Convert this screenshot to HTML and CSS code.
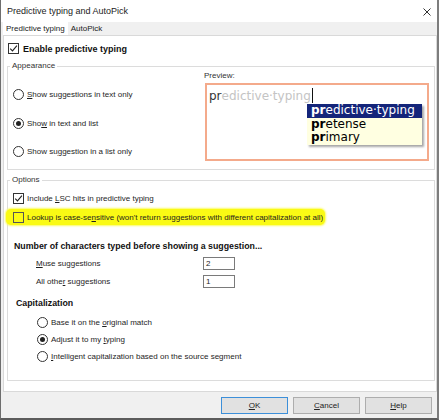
FILE: index.html
```html
<!DOCTYPE html>
<html>
<head>
<meta charset="utf-8">
<link rel="stylesheet" href="styles.css">
</head>
<body>
<div class="window">
  <div class="titlebar">
    <span class="title">Predictive typing and AutoPick</span>
    <svg class="close" width="8" height="8" viewBox="0 0 8 8"><path d="M0.5 0.5 L7.5 7.5 M7.5 0.5 L0.5 7.5" stroke="#333" stroke-width="1" fill="none"/></svg>
  </div>
  <div class="tabs">
    <div class="tab active">Predictive typing</div>
    <div class="tab">AutoPick</div>
  </div>
  <div class="panel">
    <div class="row enable">
      <span class="cb"><svg width="11" height="11" viewBox="0 0 11 11"><path d="M2.2 5.6 L4.5 7.9 L8.9 2.6" stroke="#222" stroke-width="1.1" fill="none"/></svg></span>
      <span class="bold big">Enable predictive typing</span>
    </div>
    <fieldset class="group appearance">
      <legend>Appearance</legend>
      <div class="app-body">
        <div class="radios">
          <div class="row"><span class="rb"></span><span><u>S</u>how suggestions in text only</span></div>
          <div class="row"><span class="rb on"></span><span>Sho<u>w</u> in text and list</span></div>
          <div class="row"><span class="rb"></span><span>Show su<u>g</u>gestion in a list only</span></div>
        </div>
        <div class="preview">
          <div class="preview-label">Preview:</div>
          <div class="preview-box">
            <div class="preview-line"><span class="typed">pr</span><span class="ghost">edictive·typing</span><span class="caret"></span></div>
            <div class="list">
              <div class="item sel"><b>pr</b>edictive·typing</div>
              <div class="item"><b>pr</b>etense</div>
              <div class="item"><b>pr</b>imary</div>
            </div>
          </div>
        </div>
      </div>
    </fieldset>
    <fieldset class="group options">
      <legend>Options</legend>
      <div class="row opt1">
        <span class="cb"><svg width="11" height="11" viewBox="0 0 11 11"><path d="M2.2 5.6 L4.5 7.9 L8.9 2.6" stroke="#222" stroke-width="1.1" fill="none"/></svg></span>
        <span>Include <u>L</u>SC hits in predictive typing</span>
      </div>
      <div class="row hl">
        <span class="cb"></span>
        <span>Lookup is case-se<u>n</u>sitive (won't return suggestions with different capitalization at all)</span>
      </div>
      <div class="heading num">Number of characters typed before showing a suggestion...</div>
      <div class="field-row first">
        <span class="field-label"><u>M</u>use suggestions</span>
        <span class="input">2</span>
      </div>
      <div class="field-row">
        <span class="field-label">All othe<u>r</u> suggestions</span>
        <span class="input">1</span>
      </div>
      <div class="heading cap">Capitalization</div>
      <div class="cap-radios">
        <div class="row"><span class="rb"></span><span>Base it on the <u>o</u>riginal match</span></div>
        <div class="row"><span class="rb on"></span><span>Adjust it to my <u>t</u>yping</span></div>
        <div class="row"><span class="rb"></span><span><u>I</u>ntelligent capitalization based on the source segment</span></div>
      </div>
    </fieldset>
  </div>
  <div class="buttonbar">
    <div class="btn default"><u>O</u>K</div>
    <div class="btn"><u>C</u>ancel</div>
    <div class="btn"><u>H</u>elp</div>
  </div>
</div>
</body>
</html>
```

FILE: styles.css
```css
* { box-sizing: border-box; }
html, body { margin: 0; padding: 0; background: #ffffff; }
body {
  width: 440px; height: 420px; overflow: hidden;
  font-family: "Liberation Sans", Arial, sans-serif;
  font-size: 8px; color: #1e1e1e;
}
u { text-decoration: underline; text-underline-offset: 1px; }

.window {
  width: 439px; height: 420px;
  border-left: 1px solid #6e6e6e;
  border-right: 2px solid #7d7d7d;
  border-bottom: 2px solid #5c5c5c;
  background: #f0f0f0;
  display: flex; flex-direction: column;
}
.titlebar {
  height: 22px; flex: none; background: #fff;
  display: flex; align-items: center; justify-content: space-between;
  padding: 0 6px; font-size: 9px; color: #222;
}
.close { display: block; margin-top: 1px; }

.tabs { height: 13px; flex: none; display: flex; padding-left: 2px; background: #f0f0f0; }
.tab { line-height: 13px; padding: 0 3px; color: #222; }
.tab.active { background: #fff; }

.panel {
  height: 357px; flex: none; margin-left: 2px; width: 434px;
  background: #fff; border: 1px solid #d9d9d9;
  padding: 7px 1px 0 3px;
}

.row { display: flex; align-items: center; gap: 3px; height: 11px; }
.enable { padding-left: 1px; gap: 4px; }
.bold { font-weight: bold; }
.big { font-size: 9px; color: #111; }

.cb {
  width: 11px; height: 11px; flex: none; border: 1px solid #333; background: #fff;
}
.cb svg { display: block; margin: -1px; }
.rb {
  width: 11px; height: 11px; flex: none; border: 1px solid #333; border-radius: 50%;
  background: #fff; display: flex; align-items: center; justify-content: center;
}
.rb.on::after { content: ""; width: 5px; height: 5px; border-radius: 50%; background: #222; }

.group {
  border: 1px solid #dcdcdc; margin: 0; padding: 0; min-inline-size: auto; width: 428px;
}
.group legend {
  padding: 0 2px; margin-left: 2px; line-height: 10px; color: #333;
}
.appearance { margin-top: 7px; height: 109px; }
.app-body { display: flex; height: 98px; }
.radios {
  width: 196px; padding: 18px 0 0 5px;
  display: flex; flex-direction: column; gap: 17.5px;
}
.preview { width: 226px; }
.preview-label { line-height: 10px; color: #333; }
.preview-box {
  position: relative; margin: 2px 0 0 1px; width: 224px; height: 78px;
  border: 2px solid #f4aa8b; background: #fff; padding: 3px 0 0 2px;
}
.preview-line {
  font-family: "DejaVu Sans", Verdana, sans-serif; font-size: 12px; line-height: 14px;
  display: flex; align-items: center;
}
.typed { color: #333; }
.ghost { color: #c4c4c4; }
.caret { width: 1px; height: 15px; background: #111; margin-left: 1px; }
.list {
  position: absolute; left: 100px; top: 19px; width: 115px;
  background: #ffffe1; box-shadow: 2px 2px 2px rgba(0,0,0,0.35);
  font-family: "DejaVu Sans", Verdana, sans-serif; font-size: 12px; color: #000;
}
.item { height: 13.7px; line-height: 13.7px; padding-left: 4px; white-space: nowrap; }
.item.sel { background: #14257a; color: #fff; }

.options { margin-top: 5px; height: 206px; }
.opt1 { margin-top: 8px; padding-left: 5px; }
.hl {
  margin: 5px 0 0 -2px; height: 16px; width: 319px; padding-left: 7px;
  background: #fafa14; border-radius: 5px; box-shadow: 0 0 2px 1px #fbfb60;
}
.hl .cb { border-color: #555; background: transparent; }
.heading { font-weight: bold; font-size: 8.8px; line-height: 10px; color: #111; }
.num { margin-top: 16px; padding-left: 6px; }
.field-row { display: flex; align-items: center; height: 13px; padding-left: 28px; margin-top: 5px; }
.field-row.first { margin-top: 6px; }
.field-label { width: 167px; }
.input {
  width: 32px; height: 13px; border: 1px solid #7a7a7a; background: #fff;
  line-height: 11px; padding-left: 2px;
}
.cap { margin-top: 10px; padding-left: 8px; }
.cap-radios { margin-top: 8.5px; padding-left: 29px; display: flex; flex-direction: column; gap: 6px; }

.buttonbar {
  height: 26px; flex: none; display: flex; justify-content: flex-end; gap: 5px;
  padding: 5px 5px 0 0;
}
.btn {
  width: 67px; height: 17px; background: #e1e1e1; border: 1px solid #adadad;
  display: flex; align-items: center; justify-content: center; color: #222;
}
.btn.default { border-color: #3c8fd9; }
```
